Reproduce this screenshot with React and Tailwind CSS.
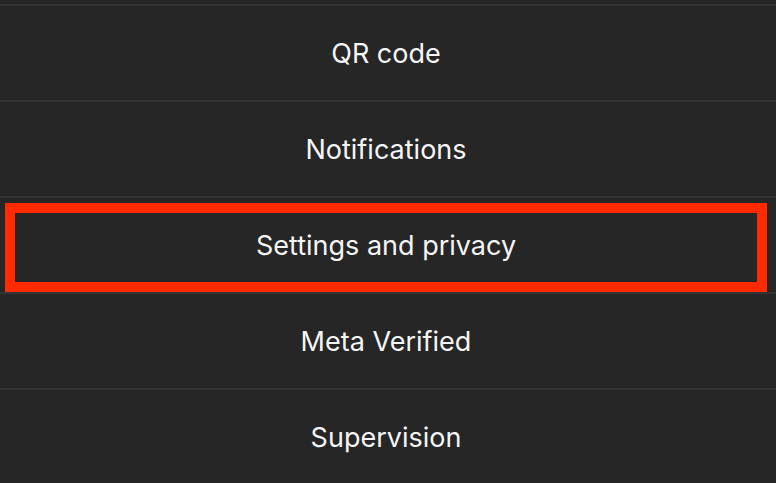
import React from 'react';

const items = ['QR code', 'Notifications', 'Settings and privacy', 'Meta Verified', 'Supervision'];

const App = () => {
  return (
    <div className="h-[483px] w-[776px] overflow-hidden bg-[#262626]" style={{ fontFamily: 'Inter, "Noto Sans", sans-serif' }}>
      <div className="h-[4px]" />
      {items.map((label, i) => (
        <div key={label} className="relative border-t-2 border-[#353535] h-[96px] flex items-center justify-center pr-[4px] pt-[2px]">
          <span className="text-[27px] text-[#f5f5f5]">{label}</span>
          {i === 2 && (
            <div className="absolute left-[5px] right-[9px] top-[5px] bottom-0 border-[10px] border-[#ff2a00]" />
          )}
        </div>
      ))}
    </div>
  );
};

export default App;
